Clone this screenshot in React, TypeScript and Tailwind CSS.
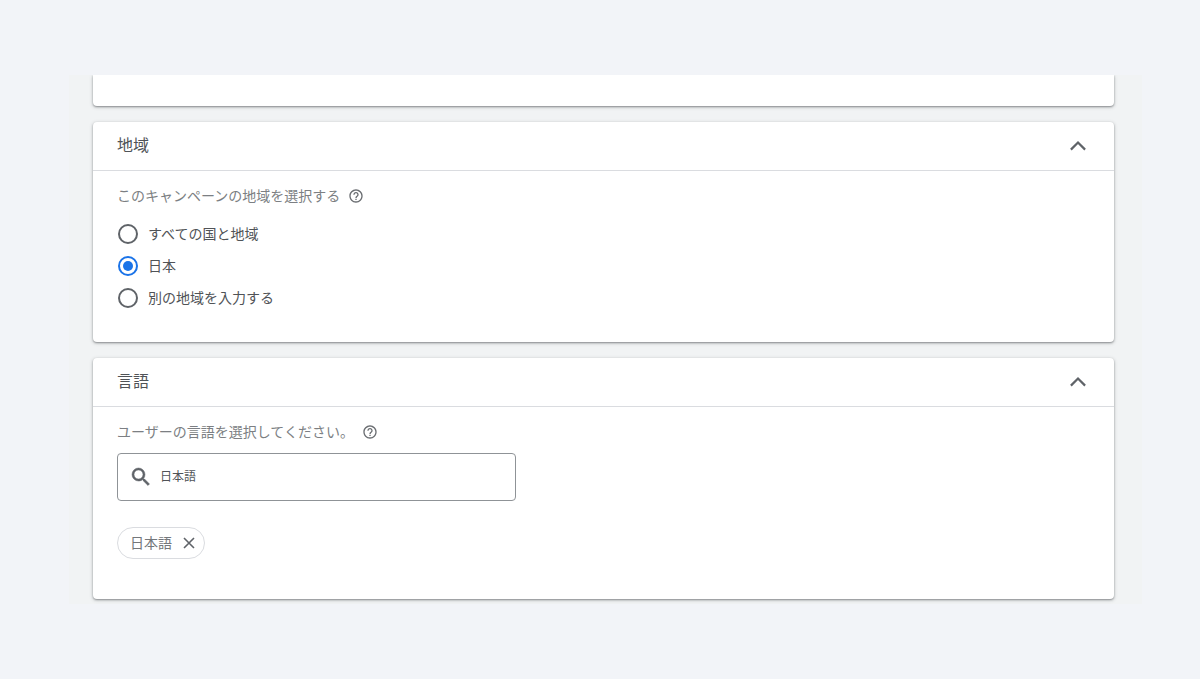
import { useState, type ReactNode } from "react";

const regions = ["すべての国と地域", "日本", "別の地域を入力する"];

const cardShadow =
  "shadow-[0_1px_2px_rgba(60,64,67,0.5),0_1px_4px_rgba(60,64,67,0.2)]";

function HelpButton() {
  return (
    <button type="button" aria-label="ヘルプ" className="text-[#6a6d71]">
      <svg viewBox="0 0 24 24" className="h-4 w-4" fill="currentColor" aria-hidden="true">
        <path d="M11 18h2v-2h-2v2zm1-16C6.48 2 2 6.48 2 12s4.48 10 10 10 10-4.48 10-10S17.52 2 12 2zm0 18c-4.41 0-8-3.59-8-8s3.59-8 8-8 8 3.59 8 8-3.59 8-8 8zm0-14c-2.21 0-4 1.79-4 4h2c0-1.1.9-2 2-2s2 .9 2 2c0 2-3 1.75-3 5h2c0-2.25 3-2.5 3-5 0-2.21-1.79-4-4-4z" />
      </svg>
    </button>
  );
}

function Card({ title, children }: { title: string; children: ReactNode }) {
  return (
    <section className={`rounded bg-white ${cardShadow}`}>
      <header className="flex h-[49px] items-center justify-between border-b border-[#dadce0] px-6">
        <h2 className="text-base text-[#505357]">{title}</h2>
        <button type="button" aria-label={`${title}を閉じる`} className="text-[#5f6368]">
          <svg viewBox="0 0 24 24" className="h-6 w-6" fill="none" stroke="currentColor" strokeWidth="2.2" aria-hidden="true">
            <path d="M4.9 15.6 12 8.5 19.1 15.6" />
          </svg>
        </button>
      </header>
      {children}
    </section>
  );
}

export default function App() {
  const [region, setRegion] = useState("日本");
  const [query, setQuery] = useState("日本語");

  return (
    <div className="min-h-screen bg-[#f2f4f8] py-[75px] pl-[69px] pr-[58px] font-['Liberation_Sans','Noto_Sans_CJK_JP',sans-serif]">
      <main className="space-y-4 overflow-hidden bg-[#f1f3f4] pb-[5px] pl-6 pr-7">
        <div className={`h-[31px] rounded-b bg-white ${cardShadow}`} />

        {/* 地域 */}
        <Card title="地域">
          <fieldset aria-labelledby="region-label" className="px-6 pb-7 pt-[15px]">
            <div className="flex h-5 items-center gap-2 text-sm text-[#7c7f83]">
              <span id="region-label">このキャンペーンの地域を選択する</span>
              <HelpButton />
            </div>
            <div className="mt-3">
              {regions.map((item) => (
                <label key={item} className="flex h-8 items-center gap-[10px] text-sm text-[#505357]">
                  <input
                    type="radio"
                    name="region"
                    value={item}
                    checked={region === item}
                    onChange={() => setRegion(item)}
                    className="ml-px h-5 w-5 appearance-none rounded-full border-2 border-[#5f6368] bg-clip-content p-[3px] checked:border-[#1a73e8] checked:bg-[#1a73e8]"
                  />
                  <span>{item}</span>
                </label>
              ))}
            </div>
          </fieldset>
        </Card>

        {/* 言語 */}
        <Card title="言語">
          <div className="px-6 pb-10 pt-[15px]">
            <div className="flex h-5 items-center gap-2 text-sm text-[#7c7f83]">
              <label htmlFor="language">ユーザーの言語を選択してください。</label>
              <HelpButton />
            </div>
            <div className="mt-[11px] flex h-12 max-w-[399px] items-center gap-[7px] rounded border border-[#8f9397] px-[11px]">
              <svg
                viewBox="0 0 24 24"
                className="h-6 w-6 shrink-0 text-[#5f6368]"
                fill="currentColor"
                stroke="currentColor"
                strokeWidth="0.5"
                aria-hidden="true"
              >
                <path d="M15.5 14h-.79l-.28-.27A6.471 6.471 0 0 0 16 9.5 6.5 6.5 0 1 0 9.5 16c1.61 0 3.09-.59 4.23-1.57l.27.28v.79l5 4.99L20.49 19l-4.99-5zm-6 0C7.01 14 5 11.99 5 9.5S7.01 5 9.5 5 14 7.01 14 9.5 11.99 14 9.5 14z" />
              </svg>
              <input
                id="language"
                type="text"
                value={query}
                onChange={(e) => setQuery(e.target.value)}
                className="min-w-0 flex-1 bg-transparent text-xs text-[#505357] outline-none"
              />
            </div>
            <div className="mt-[26px] inline-flex h-8 items-center gap-2 rounded-full border border-[#dadce0] pl-3 pr-[6px] align-top text-sm text-[#74777b]">
              <span>日本語</span>
              <button type="button" aria-label="日本語を削除" className="text-[#5f6368]">
                <svg viewBox="0 0 18 18" className="h-[18px] w-[18px]" fill="none" stroke="currentColor" strokeWidth="1.6" aria-hidden="true">
                  <path d="m4 4 10 10M14 4 4 14" />
                </svg>
              </button>
            </div>
          </div>
        </Card>
      </main>
    </div>
  );
}
